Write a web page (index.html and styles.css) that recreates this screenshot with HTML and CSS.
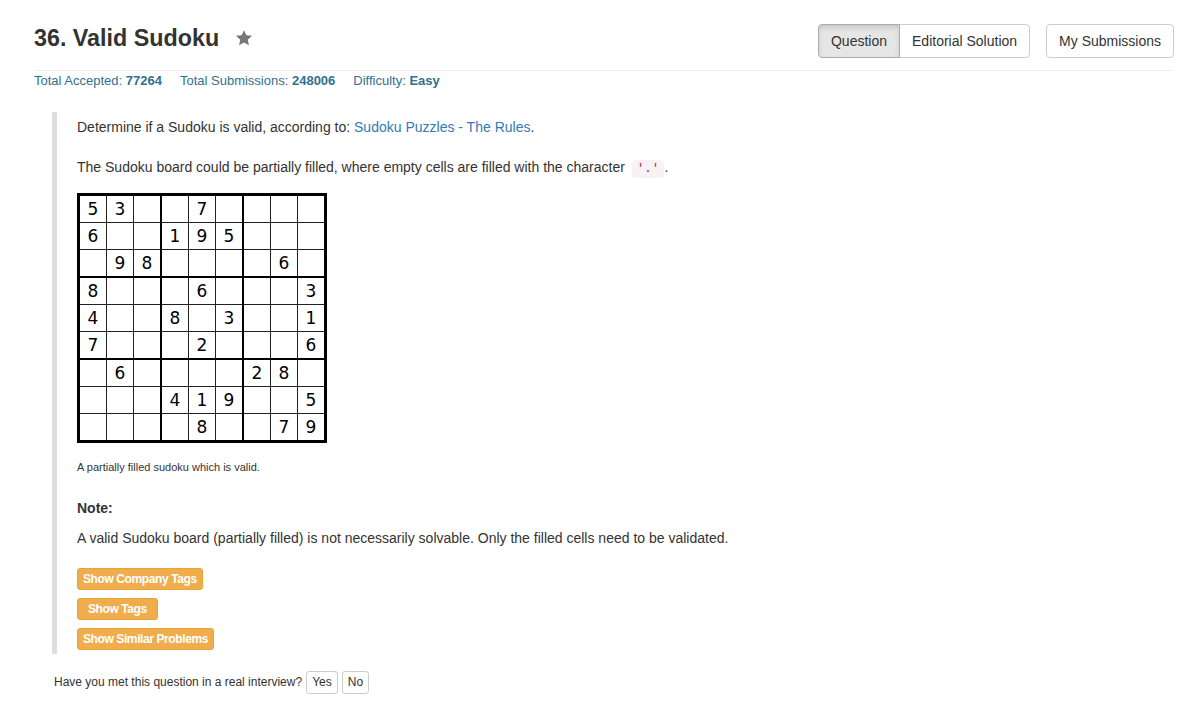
FILE: index.html
```html
<!DOCTYPE html>
<html lang="en">
<head>
<meta charset="utf-8">
<title>36. Valid Sudoku</title>
<link rel="stylesheet" href="styles.css">
</head>
<body>
<div class="page">
  <div class="header">
    <div class="title-wrap">
      <h1 class="title">36. Valid Sudoku</h1>
      <svg class="star" width="18" height="18" viewBox="0 0 24 24" aria-hidden="true"><polygon points="12,1.5 15.2,8.3 22.6,9.1 17.1,14.2 18.6,21.6 12,17.9 5.4,21.6 6.9,14.2 1.4,9.1 8.8,8.3" fill="#777"/></svg>
    </div>
    <div class="actions">
      <div class="btn-group">
        <span class="btn btn-active">Question</span><span class="btn btn-right">Editorial Solution</span>
      </div>
      <span class="btn btn-single">My Submissions</span>
    </div>
  </div>
  <div class="stats">
    <span>Total Accepted: <b>77264</b></span>
    <span>Total Submissions: <b>248006</b></span>
    <span>Difficulty: <b>Easy</b></span>
  </div>
  <div class="quote">
    <p class="p1">Determine if a Sudoku is valid, according to: <a class="link" href="#">Sudoku Puzzles - The Rules</a>.</p>
    <p class="p2">The Sudoku board could be partially filled, where empty cells are filled with the character <code class="code">'.'</code>.</p>
    <div class="sudoku">
      <div class="box"><div class="cell">5</div><div class="cell">3</div><div class="cell"></div><div class="cell">6</div><div class="cell"></div><div class="cell"></div><div class="cell"></div><div class="cell">9</div><div class="cell">8</div></div>
      <div class="box"><div class="cell"></div><div class="cell">7</div><div class="cell"></div><div class="cell">1</div><div class="cell">9</div><div class="cell">5</div><div class="cell"></div><div class="cell"></div><div class="cell"></div></div>
      <div class="box"><div class="cell"></div><div class="cell"></div><div class="cell"></div><div class="cell"></div><div class="cell"></div><div class="cell"></div><div class="cell"></div><div class="cell">6</div><div class="cell"></div></div>
      <div class="box"><div class="cell">8</div><div class="cell"></div><div class="cell"></div><div class="cell">4</div><div class="cell"></div><div class="cell"></div><div class="cell">7</div><div class="cell"></div><div class="cell"></div></div>
      <div class="box"><div class="cell"></div><div class="cell">6</div><div class="cell"></div><div class="cell">8</div><div class="cell"></div><div class="cell">3</div><div class="cell"></div><div class="cell">2</div><div class="cell"></div></div>
      <div class="box"><div class="cell"></div><div class="cell"></div><div class="cell">3</div><div class="cell"></div><div class="cell"></div><div class="cell">1</div><div class="cell"></div><div class="cell"></div><div class="cell">6</div></div>
      <div class="box"><div class="cell"></div><div class="cell">6</div><div class="cell"></div><div class="cell"></div><div class="cell"></div><div class="cell"></div><div class="cell"></div><div class="cell"></div><div class="cell"></div></div>
      <div class="box"><div class="cell"></div><div class="cell"></div><div class="cell"></div><div class="cell">4</div><div class="cell">1</div><div class="cell">9</div><div class="cell"></div><div class="cell">8</div><div class="cell"></div></div>
      <div class="box"><div class="cell">2</div><div class="cell">8</div><div class="cell"></div><div class="cell"></div><div class="cell"></div><div class="cell">5</div><div class="cell"></div><div class="cell">7</div><div class="cell">9</div></div>
    </div>
    <div class="caption">A partially filled sudoku which is valid.</div>
    <div class="note">Note:</div>
    <p class="p3">A valid Sudoku board (partially filled) is not necessarily solvable. Only the filled cells need to be validated.</p>
    <div class="tag-buttons">
      <span class="btn-warn">Show Company Tags</span>
      <span class="btn-warn btn-wide">&nbsp;Show Tags&nbsp;</span>
      <span class="btn-warn">Show Similar Problems</span>
    </div>
  </div>
  <div class="interview">
    <span>Have you met this question in a real interview?</span>
    <span class="btn-xs">Yes</span>
    <span class="btn-xs">No</span>
  </div>
</div>
</body>
</html>
```
FILE: styles.css
```css
body {
  margin: 0;
  background: #fff;
  color: #333;
  font-family: "Liberation Sans", Arial, sans-serif;
  font-size: 14px;
  line-height: 20px;
}

.page {
  width: 1140px;
  padding: 24px 0 0 34px;
}

.header {
  display: flex;
  justify-content: space-between;
  align-items: flex-start;
  padding-bottom: 12px;
  border-bottom: 1px solid #eee;
}

.title-wrap {
  display: flex;
  align-items: center;
  gap: 16px;
  margin-top: 1px;
}

.title {
  margin: 0;
  font-size: 23.3px;
  line-height: 26px;
  font-weight: bold;
  color: #333;
}

.star {
  display: block;
}

.actions {
  display: flex;
  gap: 16px;
}

.btn-group {
  display: flex;
}

.btn {
  display: inline-block;
  padding: 6px 12px;
  font-size: 14px;
  line-height: 20px;
  color: #333;
  background: #fff;
  border: 1px solid #ccc;
  border-radius: 4px;
}

.btn-active {
  background: #e6e6e6;
  border-color: #adadad;
  border-top-right-radius: 0;
  border-bottom-right-radius: 0;
  box-shadow: inset 0 3px 5px rgba(0, 0, 0, 0.125);
  position: relative;
  z-index: 1;
}

.btn-right {
  margin-left: -1px;
  border-top-left-radius: 0;
  border-bottom-left-radius: 0;
}

.stats {
  display: flex;
  gap: 18px;
  padding-top: 1px;
  font-size: 13px;
  line-height: 18px;
  color: #31708f;
}

.quote {
  margin: 22px 0 0 18px;
  padding: 5px 20px 4px 20px;
  border-left: 5px solid #ddd;
}

.quote p {
  margin: 0;
}

.p1 {
  margin-bottom: 20px !important;
}

.p2 {
  margin-bottom: 16px !important;
}

.link {
  color: #337ab7;
  text-decoration: none;
}

.code {
  font-family: "Liberation Mono", "DejaVu Sans Mono", monospace;
  font-size: 12.6px;
  line-height: 1;
  padding: 2px 5px;
  margin-left: 3px;
  color: #c7254e;
  background: #f9f2f4;
  border-radius: 4px;
}

.sudoku {
  display: grid;
  grid-template-columns: repeat(3, 80px);
  gap: 2px;
  padding: 3px;
  background: #000;
  width: max-content;
}

.box {
  display: grid;
  grid-template-columns: repeat(3, 26px);
  grid-auto-rows: 26px;
  gap: 1px;
  background: #222;
}

.cell {
  background: #fff;
  color: #000;
  font-family: "DejaVu Sans", sans-serif;
  font-size: 17px;
  line-height: 26px;
  text-align: center;
}

.caption {
  margin-top: 17px;
  font-size: 11px;
  line-height: 15px;
}

.note {
  margin-top: 23px;
  font-weight: bold;
}

.p3 {
  margin-top: 10px !important;
}

.tag-buttons {
  margin-top: 20px;
  display: flex;
  flex-direction: column;
  align-items: flex-start;
  gap: 8px;
}

.btn-warn {
  display: inline-block;
  padding: 1px 5px;
  font-size: 12px;
  line-height: 18px;
  font-weight: bold;
  letter-spacing: -0.4px;
  color: #fff;
  background: #f0ad4e;
  border: 1px solid #eea236;
  border-radius: 3px;
}

.btn-wide {
  padding: 1px 7px;
}

.interview {
  margin: 17px 0 0 20px;
  display: flex;
  align-items: center;
  gap: 4px;
  font-size: 12px;
  line-height: 17px;
}

.btn-xs {
  display: inline-block;
  padding: 2px 5px;
  font-size: 12px;
  line-height: 17px;
  color: #333;
  background: #fff;
  border: 1px solid #ccc;
  border-radius: 3px;
}
```
